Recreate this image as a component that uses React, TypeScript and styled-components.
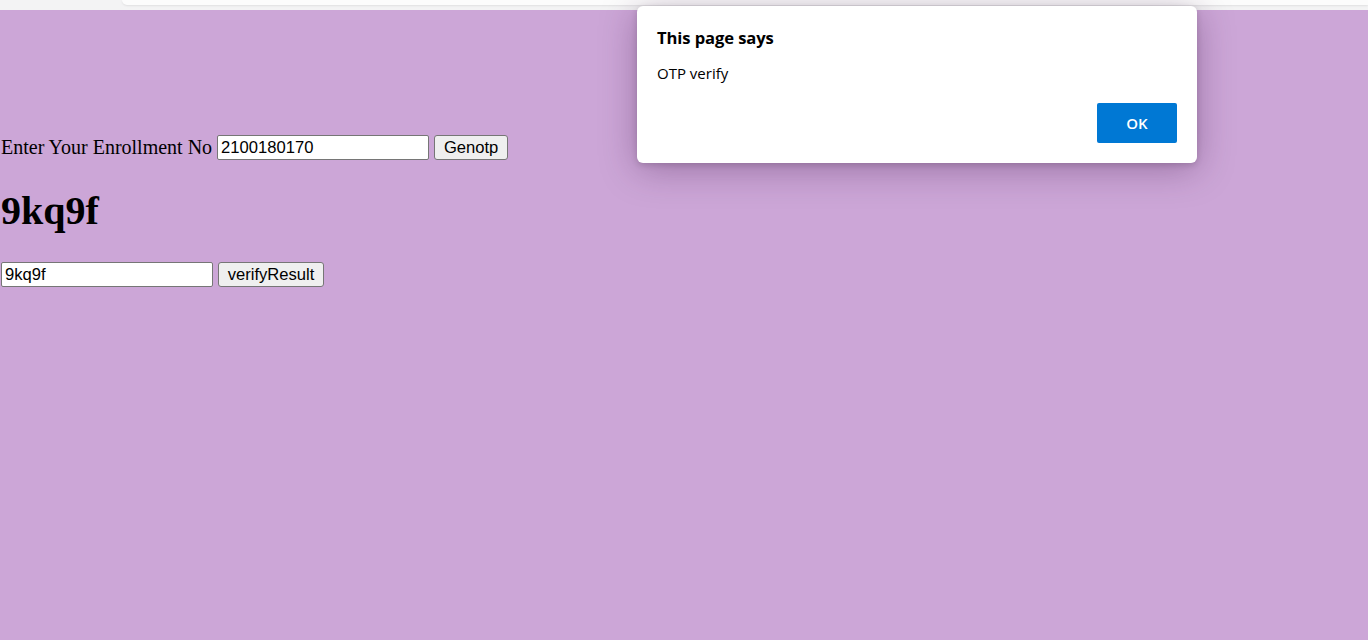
import React from "react";
import styled, { createGlobalStyle } from "styled-components";

const Global = createGlobalStyle`
  html, body { margin: 0; padding: 0; }
  body { background: #cca6d7; overflow: hidden; }
  #root { height: 640px; }
`;

const Screen = styled.div`
  position: relative;
  width: 1368px;
  height: 640px;
  display: flex;
  flex-direction: column;
  background: #cca6d7;
`;

const Chrome = styled.div`
  height: 10px;
  background: #f3f3f4;
  display: flex;
  flex-shrink: 0;
`;

const ChromeBar = styled.div`
  margin-left: 122px;
  flex: 1;
  height: 5px;
  background: #fcfcfc;
  border-bottom-left-radius: 8px;
  box-shadow: 0 1px 2px rgba(0, 0, 0, 0.08);
`;

const Page = styled.div`
  flex: 1;
  padding: 125px 0 0 1px;
  font-family: "Liberation Serif", "Times New Roman", serif;
  font-size: 20px;
  color: #000;
`;

const Row = styled.div`
  display: flex;
  align-items: center;
  gap: 5px;
  height: 25px;
`;

const Label = styled.span`
  line-height: 25px;
  white-space: nowrap;
`;

const TextInput = styled.input`
  box-sizing: border-box;
  width: 212px;
  height: 25px;
  margin: 0;
  padding: 1px 3px;
  border: 1px solid #767676;
  border-radius: 2px;
  background: #fff;
  font-family: "Liberation Sans", Arial, sans-serif;
  font-size: 16.6px;
  color: #000;
  outline: none;
`;

const Button = styled.button<{ $w: number }>`
  box-sizing: border-box;
  width: ${(p) => p.$w}px;
  height: 25px;
  margin: 0;
  padding: 0;
  border: 1px solid #767676;
  border-radius: 3px;
  background: #efefef;
  font-family: "Liberation Sans", Arial, sans-serif;
  font-size: 16.6px;
  color: #000;
`;

const Otp = styled.h1`
  margin: 0;
  height: 102px;
  display: flex;
  align-items: center;
  font-family: "Liberation Serif", "Times New Roman", serif;
  font-size: 40px;
  font-weight: bold;
  line-height: 1;
`;

const Dialog = styled.div`
  position: absolute;
  left: 637px;
  top: 6px;
  width: 560px;
  height: 157px;
  box-sizing: border-box;
  padding: 20px;
  background: #fff;
  border-radius: 6px;
  box-shadow: 0 6px 36px rgba(60, 20, 70, 0.35), 0 2px 6px rgba(0, 0, 0, 0.15);
  display: flex;
  flex-direction: column;
  font-family: "Open Sans", "Noto Sans", sans-serif;
  color: #000;
`;

const DialogTitle = styled.div`
  font-size: 16.6px;
  font-weight: 700;
  line-height: 22px;
  letter-spacing: -0.1px;
  margin-top: 1px;
`;

const DialogBody = styled.div`
  font-size: 15px;
  line-height: 20px;
  margin-top: 14px;
`;

const DialogFooter = styled.div`
  display: flex;
  justify-content: flex-end;
  margin-top: auto;
`;

const OkButton = styled.button`
  width: 80px;
  height: 40px;
  border: none;
  border-radius: 2px;
  background: #0078d4;
  color: #fff;
  font-family: "Open Sans", "Noto Sans", sans-serif;
  font-size: 15px;
  font-weight: 600;
  padding-bottom: 2px;
`;

export default function App() {
  return (
    <Screen>
      <Global />
      <Chrome>
        <ChromeBar />
      </Chrome>
      <Page>
        <Row>
          <Label>Enter Your Enrollment No</Label>
          <TextInput defaultValue="2100180170" />
          <Button $w={74}>Genotp</Button>
        </Row>
        <Otp>9kq9f</Otp>
        <Row>
          <TextInput defaultValue="9kq9f" />
          <Button $w={106}>verifyResult</Button>
        </Row>
      </Page>
      <Dialog>
        <DialogTitle>This page says</DialogTitle>
        <DialogBody>OTP verify</DialogBody>
        <DialogFooter>
          <OkButton>OK</OkButton>
        </DialogFooter>
      </Dialog>
    </Screen>
  );
}
